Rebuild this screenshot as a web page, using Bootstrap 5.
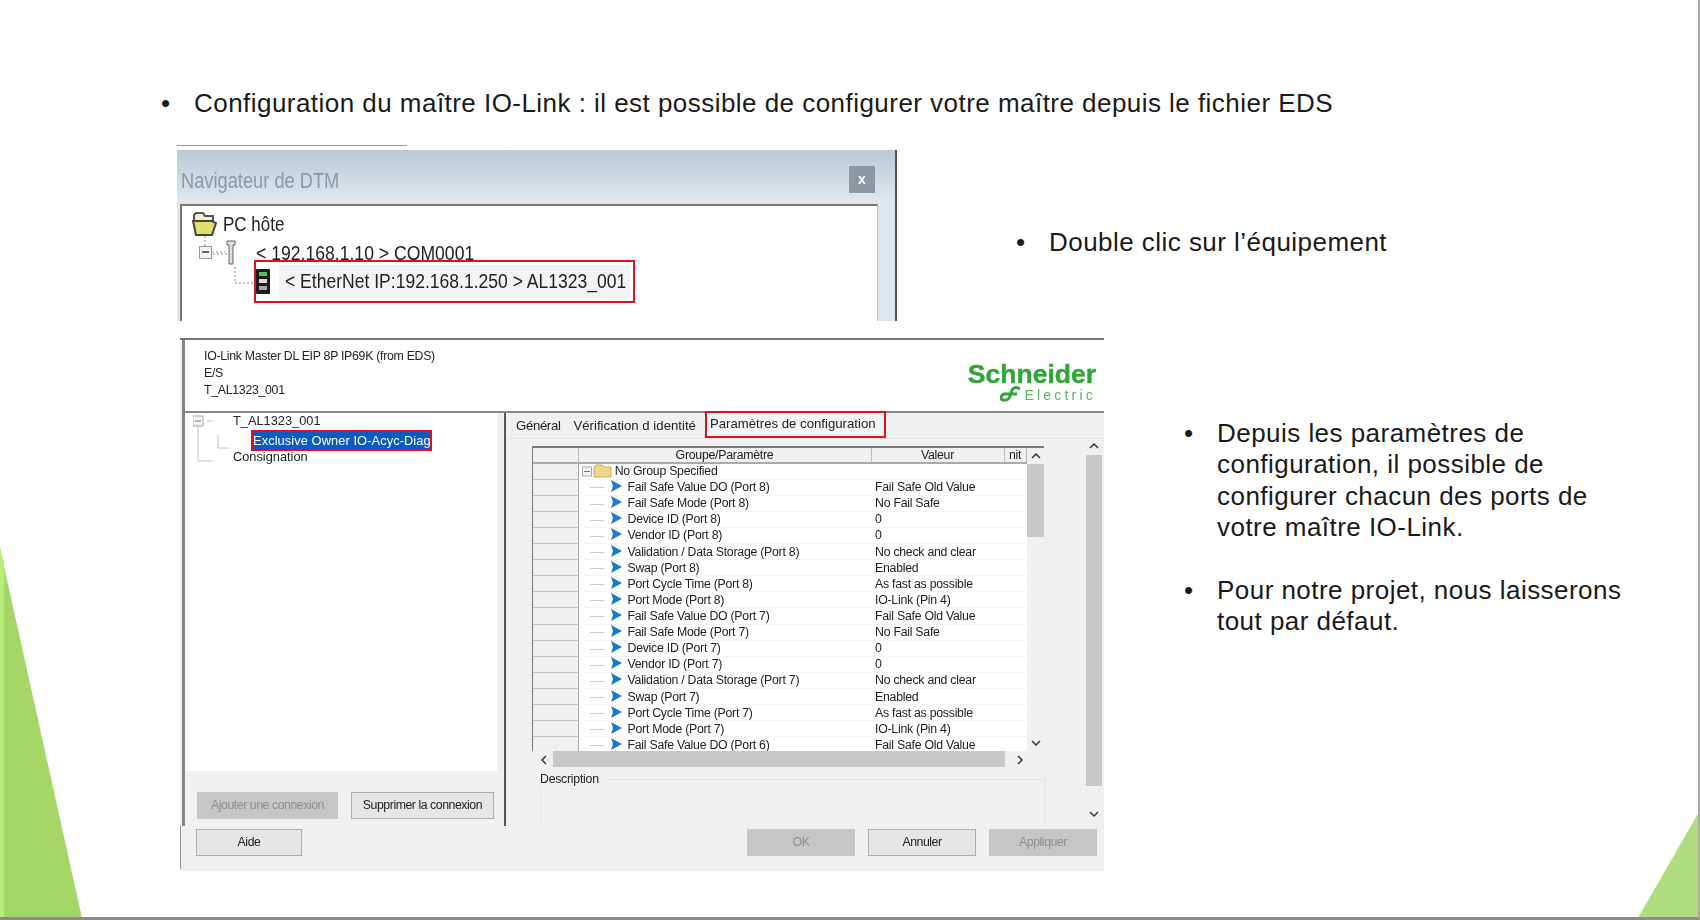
<!DOCTYPE html>
<html lang="fr">
<head>
    <meta charset="utf-8">
    <title>Configuration du maître IO-Link</title>
    <link href="https://cdn.jsdelivr.net/npm/bootstrap@5.3.0/dist/css/bootstrap.min.css" rel="stylesheet">
    <style>
        html, body {margin: 0; background: #fff; overflow: hidden;}
        body {font-family: "Liberation Sans", Arial, sans-serif; color: #1a1a1a;}
        /* slide = free canvas, its blocks are placed like on a PowerPoint page */
        .slide {position: relative; width: 1700px; height: 920px; overflow: hidden; background: #fff;
                border-right: 2px solid #a8a8a8; border-bottom: 3px solid #8c8c8c;}
        .deco {position: absolute; left: 0; top: 0;}
        .bul {position: absolute; font-size: 26px; line-height: 31.4px; letter-spacing: .46px; padding-left: 33px; margin: 0; list-style: none;}
        .bul li {position: relative;}
        .bul li::before {content: "•"; position: absolute; left: -33px;}
        .bul-top {left: 161px; top: 88px; width: 1300px;}
        .bul-dbl {left: 1016px; top: 227px; width: 500px;}
        .bul-cfg {left: 1184px; top: 418px; width: 460px;}
        .bul-prj {left: 1184px; top: 575px; width: 460px;}

        .dtm {position: absolute; left: 177px; top: 150px; width: 720px; height: 171px; overflow: hidden;
              background: linear-gradient(#b9c9d6, #dfe7ed 50px); border-right: 2px solid #555; filter: blur(.4px);}
        .dtm-rule {position: absolute; left: 177px; top: 145px; width: 230px; height: 1px; background: #999;}
        .dtm-bar {height: 54px; padding-left: 4px; padding-right: 20px;}
        .dtm-title {font-size: 22px; color: #8b99a4; transform: scaleX(.83); margin-top: 6px;}
        .cond {display: inline-block; transform-origin: left center; white-space: nowrap;}
        .dtm-x {width: 26px; height: 27px; background: #8d98a2; color: #fff; font-weight: 700; font-size: 14px; margin-top: 5px;}
        .dtm-tree {margin-left: 3px; margin-right: 17px; height: 117px; background: #fff; border-top: 2px solid #777; border-left: 2px solid #777; border-right: 1px solid #bbb; position: relative; font-size: 20px; color: #222;}
        .dtm-pc {height: 32px; padding: 3px 0 0 10px; gap: 6px;}
        .dtm-com {height: 28px; padding: 1px 0 0 17px;}
        .dtm-sel {border: 2px solid #e01020; width: 381px; height: 43px; margin-left: 72px; margin-top: -6px; gap: 9px; position: relative;}
        .dtm-sel-txt {background: #f3f3f3; height: 33px; width: 351px; padding-left: 6px; line-height: 33px; overflow: hidden;}
        .minus {display: inline-block; width: 13px; height: 13px; border: 1px solid #999; position: relative; background: #f4f4f4;}
        .minus::after {content: ""; position: absolute; left: 2px; right: 2px; top: 4px; height: 2px; background: #666;}
        .dtm-links {position: absolute; left: 0; top: 0;}

        .cfgwin {position: absolute; left: 180px; top: 338px; width: 924px; height: 533px; background: #f0f0f0; border-top: 2px solid #777; filter: blur(.35px); font-size: 12.3px; color: #222;}
        .cfg-head {height: 71px; background: #fff; border-left: 3px solid #888; padding: 8px 8px 0 19px; line-height: 17.2px; margin-left: 2px; letter-spacing: -.28px;}
        .logo-box {width: 132px; color: #2fa636; letter-spacing: 0; text-align: right;}
        .logo-s {font-size: 26.5px; font-weight: 700; line-height: 22px; margin-top: 15px; -webkit-text-stroke: .4px #2fa636;}
        .logo-e {font-size: 14px; line-height: 14px; letter-spacing: 3.2px; margin-top: 1px; gap: 3px; color: #58b75a;}
        .cfg-main {height: 415px; border-top: 2px solid #888; margin-left: 2px;}
        .cfg-left {width: 324px; border-left: 3px solid #888; border-right: 2px solid #555;}
        .cfg-tree {height: 358px; width: 312px; background: #fff; position: relative; padding: 0 0 0 48px; font-size: 12.8px;}
        .tree-row {height: 18px; line-height: 16px;}
        .tree-sel {display: block; background: #0a5cc2; color: #fff; border: 2px solid #e01020; margin-left: 18px; line-height: 17px; height: 21px; width: 181px; white-space: nowrap; overflow: hidden; letter-spacing: .1px; position: relative; top: -1px;}
        .tree-lines {position: absolute; left: 8px; top: 2px;}
        .cfg-left-btns {padding: 21px 0 0 12px; gap: 13px;}
        .wbtn {height: 27px; border: 1px solid #adadad; background: #e6e6e6; color: #222; font-size: 12.3px; letter-spacing: -.45px; padding: 0;}
        .wbtn-off {background: #c6c6c6; border-color: #c6c6c6; color: #8e8e8e;}
        .w-add {width: 141px;} .w-del {width: 143px;} .w-foot {width: 108px;} .w-help {width: 106px;}

        .cfg-right {width: 598px;}
        .cfg-tabs {height: 26px; padding-left: 10px; gap: 13px; position: relative; border-bottom: 1px solid #e4e4e4; font-size: 13.2px;}
        .wtab {line-height: 26px; white-space: nowrap;}
        .wtab-gen {letter-spacing: -.35px;}
        .wtab-on {border: 2px solid #e01020; line-height: 21px; height: 27px; padding: 0 8px 0 3px; margin-left: -4px; background: #f4f4f4; margin-top: -3px;}
        .cfg-content {height: 388px;}
        .gridwrap {margin-left: 26px; padding-top: 7px; width: 520px; letter-spacing: -.25px;}
        .pgrid {width: 512px; height: 305px; overflow: hidden; position: relative; background: #f0f0f0; border-top: 2px solid #777; border-left: 1px solid #777;}
        .pgrid table {table-layout: fixed; width: 493px; background: #fff;}
        .pgrid th {height: 15px; padding: 0; font-weight: 400; text-align: center; background: #f0f0f0; border-right: 1px solid #bbb; border-bottom: 2px solid #aaa; line-height: 13px;}
        .pgrid td {height: 16.12px; padding: 0; white-space: nowrap; line-height: 14px; border-bottom: 1px solid #f6f6f6; vertical-align: middle;}
        .pgrid td.rh {background: #f0f0f0; border-right: 1px solid #aaa; border-bottom: 1px solid #c0c0c0;}
        .pgrid td.val {padding-left: 4px;}
        .tick {display: inline-block; width: 14px; height: 1px; background: #ccc; vertical-align: middle; margin: 0 7px 0 11px;}
        .parrow {vertical-align: -1px; margin-right: 6px;}
        .vbar {position: absolute; right: 0; top: 0; width: 17px; height: 303px; background: #f0f0f0;}
        .vthumb {position: absolute; left: 0; top: 16px; width: 17px; height: 73px; background: #c8c8c8;}
        .chev {position: absolute; font-size: 0;}
        .hbar {width: 512px; height: 16px; position: relative; background: #f0f0f0; margin-left: 1px;}
        .hthumb {position: absolute; left: 20px; top: 0; width: 452px; height: 16px; background: #c8c8c8;}
        .descbox {width: 506px; height: 47px; margin-left: 8px; margin-top: 12px; border: 1px solid #e4e4e4; border-bottom: 0; position: relative;}
        .desc-lbl {position: absolute; left: -1px; top: -8px; background: #f0f0f0; padding-right: 5px; line-height: 14px;}
        .oscroll {position: relative; width: 16px; height: 385px; margin-left: auto; margin-right: 2px; margin-top: -1px;}
        .othumb {position: absolute; left: 0; top: 17px; width: 16px; height: 331px; background: #c8c8c8;}
        .cfg-foot {height: 43px; padding: 3px 7px 0 15px; border-left: 1px solid #999;}
        .foot-r {gap: 13px;}
    </style>
</head>
<body>
<div class="slide">
    <svg class="deco" width="1700" height="920">
        <polygon points="0,548 82,918 0,918" fill="#a5d768"/>
        <rect x="0" y="560" width="4" height="358" fill="#b6ee78"/>
        <polygon points="0,548 4,564 0,564" fill="#b6ee78"/>
        <polygon points="1700,810 1638,918 1700,918" fill="#b0dc80"/>
    </svg>

    <ul class="bul bul-top"><li>Configuration du maître IO-Link : il est possible de configurer votre maître depuis le fichier EDS</li></ul>

    <div class="dtm-rule"></div>
    <div class="dtm">
        <div class="dtm-bar d-flex justify-content-between align-items-center">
            <span class="dtm-title cond">Navigateur de DTM</span>
            <span class="dtm-x d-flex align-items-center justify-content-center">x</span>
        </div>
        <div class="dtm-tree">
            <svg class="dtm-links" width="80" height="100"><path d="M23 30 V41 M31 48 H47 M53 61 V77 H73" fill="none" stroke="#888" stroke-dasharray="2 2"/></svg>
            <div class="d-flex align-items-center dtm-pc">
                <svg width="25" height="24" viewBox="0 0 25 24"><path d="M2 8 V3 L4 1 H11 L13 4 H21 V9" fill="#eeeed0" stroke="#555" stroke-width="2"/><path d="M1 9 H20 L24 11 L20 23 H4 Z" fill="#dede6a" stroke="#444" stroke-width="2"/></svg>
                <span class="cond" style="transform:scaleX(.85)">PC hôte</span>
            </div>
            <div class="d-flex align-items-center dtm-com">
                <span class="minus"></span>
                <svg width="44" height="27" viewBox="0 0 44 27"><path d="M0 13 H13" stroke="#999" stroke-dasharray="2 2"/><path d="M15 2 H23 V6 H21 V25 H17 V6 H15Z" fill="#ddd" stroke="#666"/></svg>
                <span class="cond" style="transform:scaleX(.88)">&lt; 192.168.1.10 &gt; COM0001</span>
            </div>
            <div class="d-flex align-items-center dtm-sel">
                <svg width="14" height="25" viewBox="0 0 14 25"><rect width="14" height="25" rx="1" fill="#1c1c1c"/><rect x="3" y="3" width="8" height="4" fill="#5cc05c"/><rect x="3" y="10" width="8" height="4" fill="#ddd"/><rect x="3" y="17" width="8" height="4" fill="#aaa"/></svg>
                <div class="dtm-sel-txt"><span class="cond" style="transform:scaleX(.877)">&lt; EtherNet IP:192.168.1.250 &gt; AL1323_001</span></div>
            </div>
        </div>
    </div>

    <ul class="bul bul-dbl"><li>Double clic sur l’équipement</li></ul>

    <div class="cfgwin">
        <div class="cfg-head d-flex justify-content-between">
            <div>IO-Link Master DL EIP 8P IP69K (from EDS)<br>E/S<br>T_AL1323_001</div>
            <div class="logo-box">
                <div class="logo-s">Schneider</div>
                <div class="logo-e d-flex justify-content-end align-items-center">
                    <svg width="22" height="17" viewBox="0 0 22 17"><path d="M20 3 C15 0 12 2 11 7 C10 12 8 15 3 14 C0 13 1 9 4 8 H17" fill="none" stroke="#2fa636" stroke-width="3"/></svg>
                    <span>Electric</span>
                </div>
            </div>
        </div>
        <div class="cfg-main d-flex">
            <div class="cfg-left">
                <div class="cfg-tree">
                    <svg class="tree-lines" width="50" height="60"><rect x="0" y="1" width="10" height="10" fill="#f4f4f4" stroke="#aaa"/><path d="M2 6 H8" stroke="#777"/><path d="M14 6 H20 M5 11 V46 H20 M25 20 V33 H36" stroke="#c4c4c4" fill="none"/></svg>
                    <div class="tree-row">T_AL1323_001</div>
                    <div class="tree-row"><span class="tree-sel">Exclusive Owner IO-Acyc-Diag</span></div>
                    <div class="tree-row">Consignation</div>
                </div>
                <div class="cfg-left-btns d-flex">
                    <button class="wbtn wbtn-off w-add">Ajouter une connexion</button>
                    <button class="wbtn w-del">Supprimer la connexion</button>
                </div>
            </div>
            <div class="cfg-right">
                <div class="cfg-tabs d-flex align-items-center">
                    <span class="wtab wtab-gen">Général</span>
                    <span class="wtab">Vérification d identité</span>
                    <span class="wtab wtab-on">Paramètres de configuration</span>
                </div>
                <div class="cfg-content d-flex">
                    <div class="gridwrap">
                        <div class="pgrid">
                            <table>
                                <colgroup><col style="width:45px"><col style="width:293px"><col style="width:133px"><col style="width:22px"></colgroup>
                                <thead><tr><th></th><th>Groupe/Paramètre</th><th>Valeur</th><th>nit</th></tr></thead>
                                <tbody id="paramRows"></tbody>
                            </table>
                            <div class="vbar">
                                <div class="vthumb"></div>
                                <svg class="chev" style="left:4px;top:4px" width="10" height="7"><path d="M1 6 L5 2 L9 6" fill="none" stroke="#333" stroke-width="1.5"/></svg>
                                <svg class="chev" style="left:4px;top:292px" width="10" height="7"><path d="M1 1 L5 5 L9 1" fill="none" stroke="#333" stroke-width="1.5"/></svg>
                            </div>
                        </div>
                        <div class="hbar">
                            <div class="hthumb"></div>
                            <svg class="chev" style="left:7px;top:4px" width="7" height="10"><path d="M6 1 L2 5 L6 9" fill="none" stroke="#333" stroke-width="1.5"/></svg>
                            <svg class="chev" style="left:484px;top:4px" width="7" height="10"><path d="M1 1 L5 5 L1 9" fill="none" stroke="#333" stroke-width="1.5"/></svg>
                        </div>
                        <div class="descbox"><span class="desc-lbl">Description</span></div>
                    </div>
                    <div class="oscroll">
                        <div class="othumb"></div>
                        <svg class="chev" style="left:3px;top:4px" width="10" height="7"><path d="M1 6 L5 2 L9 6" fill="none" stroke="#333" stroke-width="1.5"/></svg>
                        <svg class="chev" style="left:3px;top:373px" width="10" height="7"><path d="M1 1 L5 5 L9 1" fill="none" stroke="#333" stroke-width="1.5"/></svg>
                    </div>
                </div>
            </div>
        </div>
        <div class="cfg-foot d-flex justify-content-between">
            <button class="wbtn w-help">Aide</button>
            <div class="d-flex foot-r">
                <button class="wbtn wbtn-off w-foot">OK</button>
                <button class="wbtn w-foot">Annuler</button>
                <button class="wbtn wbtn-off w-foot">Appliquer</button>
            </div>
        </div>
    </div>

    <ul class="bul bul-cfg"><li>Depuis les paramètres de configuration, il possible de configurer chacun des ports de votre maître IO-Link.</li></ul>
    <ul class="bul bul-prj"><li>Pour notre projet, nous laisserons tout par défaut.</li></ul>
</div>

<script>
    const portRows = port => [
        ["Fail Safe Value DO (Port " + port + ")", "Fail Safe Old Value"],
        ["Fail Safe Mode (Port " + port + ")", "No Fail Safe"],
        ["Device ID (Port " + port + ")", "0"],
        ["Vendor ID (Port " + port + ")", "0"],
        ["Validation / Data Storage (Port " + port + ")", "No check and clear"],
        ["Swap (Port " + port + ")", "Enabled"],
        ["Port Cycle Time (Port " + port + ")", "As fast as possible"],
        ["Port Mode (Port " + port + ")", "IO-Link (Pin 4)"]
    ];
    const rows = [...portRows(8), ...portRows(7), ["Fail Safe Value DO (Port 6)", "Fail Safe Old Value"]];
    const arrow = '<svg class="parrow" width="11" height="12" viewBox="0 0 11 12"><path d="M0 0 L11 6 L0 12 L2 6Z" fill="#1c78d2"/></svg>';
    let html = `<tr><td class="rh"></td><td style="padding-left:3px">
        <svg width="30" height="14" viewBox="0 0 30 14" style="vertical-align:-3px"><rect x=".5" y="3" width="9" height="9" fill="#f4f4f4" stroke="#aaa"/><path d="M2 7.5 H8" stroke="#777"/><path d="M12 3 L14 1 H20 L22 3 H29 V13 H12Z" fill="#f0d58a" stroke="#c9aa5c"/></svg>
        No Group Specified</td><td></td><td></td></tr>`;
    rows.forEach(r => {
        html += `<tr><td class="rh"></td><td><span class="tick"></span>${arrow}${r[0]}</td><td class="val">${r[1]}</td><td></td></tr>`;
    });
    document.getElementById("paramRows").innerHTML = html;
</script>
</body>
</html>
